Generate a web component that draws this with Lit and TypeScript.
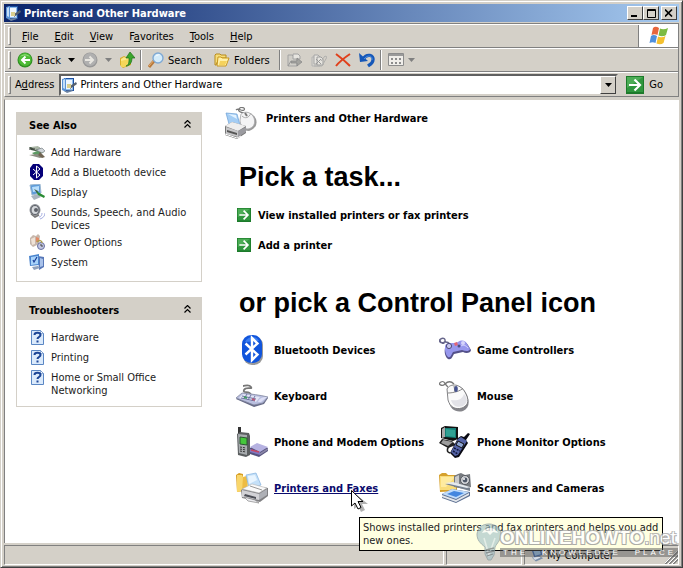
import { LitElement, html, css, svg } from "lit";
import { customElement } from "lit/decorators.js";

const draw = (w: number, h: number, vw: number, vh: number, body: unknown) =>
  html`<svg width=${w} height=${h} viewBox="0 0 ${vw} ${vh}" aria-hidden="true">${body}</svg>`;
const small = (body: unknown) => draw(16, 16, 16, 16, body);
const large = (body: unknown) => draw(32, 32, 32, 32, body);

const caret = draw(7, 4, 7, 4, svg`<path d="M0 0h7L3.500 4z" fill="currentColor"/>`);
const checklist = small(svg`
  <path d="M3 1h10v13H3z" fill="#1d4fa0"/><path d="M4 2h8v11H4z" fill="#8fbdec"/>
  <path d="M5 3h6v9H5z" fill="#eef6ff"/><path d="M1 2l4-1v14l-4-2z" fill="#5b93d6"/><path d="M2 3l2-1v10l-2-1z" fill="#c4def8"/>
  <path d="M9 9l6-4 1 2-7 5z" fill="#55606e"/><path d="M6 7h4v4H6z" fill="#d9cf8f"/><path d="M3 14l8-1 1 1-6 2z" fill="#6c82a0"/>`);
const backIcon = small(svg`
  <circle cx="8" cy="8" r="7.500" fill="#2f8f22"/><circle cx="8" cy="7.500" r="6.500" fill="#4dbb35"/>
  <path d="M3 5a6 6 0 0 1 10 0c-3-2-7-2-10 0z" fill="#94dd7d"/>
  <path d="M13 8H5M8.500 4.500L5 8l3.500 3.500" stroke="#fff" stroke-width="2" fill="none"/>`);
const forwardIcon = small(svg`
  <circle cx="8" cy="8" r="7.500" fill="#989898"/><circle cx="8" cy="7.500" r="6.500" fill="#b0b0b0"/>
  <path d="M3 8h8M7.500 4.500L11 8l-3.500 3.500" stroke="#e8e6e0" stroke-width="2" fill="none"/>`);
const upIcon = small(svg`
  <path d="M1 6l4-2 2 1 5-1v9l-8 3-3-3z" fill="#d8ae2c"/><path d="M2 7l3-2 2 1 4-1-1 8-6 2-2-2z" fill="#fbe88a"/>
  <path d="M2 9l8-2-2 7-6 1z" fill="#f4d659"/>
  <path d="M7 14c3-1 3-4 3-8H7l4-6 5 6h-3c0 4-2 8-6 8z" fill="#3aa62b" stroke="#1e6f17" stroke-width=".7"/>`);
const searchIcon = small(svg`
  <path d="M1 15l5-6" stroke="#b8793a" stroke-width="3"/><path d="M1 14l5-6" stroke="#e4af74" stroke-width="1"/>
  <circle cx="10" cy="6" r="5" fill="#d4ecfb" stroke="#7fa9d4" stroke-width="1.400"/><path d="M7 5c1-2 3-3 5-2-2 0-4 1-5 2z" fill="#fff"/>`);
const foldersIcon = small(svg`
  <path d="M1 3l1-1h4l1 1h5v3H5L2 13H1z" fill="#f6dd79" stroke="#b78b1e"/>
  <path d="M4 5h3l1 1h7l-3 8H3z" fill="#fff0a8" stroke="#c9981f"/><path d="M6 9h7l-2 4H5z" fill="#f5d25c"/>`);
const moveIcon = small(svg`
  <path d="M1 3h4l1 1h4v10H1z" fill="#d0cec8" stroke="#a2a2a2"/><path d="M6 2h5l2 2v3H6z" fill="#e7e5e0" stroke="#a2a2a2"/>
  <path d="M4 9h6V6l5 4-5 4v-3H4z" fill="#a4a4a0" stroke="#858585" stroke-width=".7"/><path d="M1 14l3-5" stroke="#999"/>`);
const copyIcon = small(svg`
  <path d="M1 5h4l1 1h3v8H1z" fill="#d6d4ce" stroke="#b4b4b4"/><path d="M3 3h4l2 2v7H3z" fill="#e7e5e0" stroke="#a6a6a6"/>
  <path d="M6 5h4l2 2v6H6z" fill="#e7e5e0" stroke="#9c9c9c"/><path d="M10 9l4-5 2 1-5 9H3" fill="none" stroke="#b0b0ae"/><path d="M5 7l5 5M10 7l-5 5" stroke="#999"/>`);
const deleteIcon = small(svg`<path d="M1 2C5 5 10 9 15 14M15 2C9 6 5 9 1 14" stroke="#e0401c" stroke-width="2" fill="none"/>`);
const undoIcon = small(svg`
  <path d="M4 7c4-6 11-4 10 1 0 3-2 4-5 6" stroke="#1557b8" stroke-width="3.200" fill="none"/>
  <path d="M0 1l1 9 8-1z" fill="#1557b8"/><path d="M5 7c4-5 9-3 8 1" stroke="#4a8de0" stroke-width="1" fill="none"/>`);
const viewsIcon = small(svg`
  <path d="M.5 1.500h15v12H.5z" fill="#f0eeea" stroke="#8c8c8c"/><path d="M1 2h14v2H1z" fill="#9a9a9a"/>
  <path d="M3 6h2v2H3zm4 0h2v2H7zm4 0h2v2h-2zM3 10h2v2H3zm4 0h2v2H7zm4 0h2v2h-2z" fill="#8c8c8c"/>`);
const flagIcon = draw(20, 20, 20, 20, svg`
  <path d="M4 2c2-2 4-1 6 0L8.500 9C6.500 8 4.500 8 2.500 9z" fill="#e8663c"/><path d="M11 2.500c2 1 5 1 8-.5l-2 7c-2 1.500-5 1.500-7.500.5z" fill="#7cbb42"/>
  <path d="M2 10c2-1.500 4-1 6 0L6.500 17c-2-1-4-1-6 0z" fill="#4f8fdc"/><path d="M9 10.500c2 1 5 1 7.500-.5l-2 7c-2 1.500-4.500 1.500-7 .5z" fill="#f4c02e"/>`);
const greenArrow = (s: number) => draw(s, s, 18, 18, svg`
  <path d="M0 0h18v18H0z" fill="#1c7a2b"/><path d="M1 1h16v15H1z" fill="#2f963e"/><path d="M1 1h16L1 12z" fill="#4bac55"/>
  <path d="M3 9h11M8.500 3.500L14 9l-5.500 5.500" fill="none" stroke="#fff" stroke-width="2.200"/>`);
const chevrons = draw(7, 8, 7, 8, svg`<path d="M.5 3.500l3-3 3 3M.5 7.500l3-3 3 3" fill="none" stroke="#000" stroke-width="1.200"/>`);

const addHardware = small(svg`
  <path d="M0 3h10l4 4-4 1-8-2z" fill="#4f6650"/><path d="M2 3l7-1 3 3-6 1z" fill="#aab6a6"/><path d="M0 5h6" stroke="#333"/>
  <path d="M3 9l8-3 4 2-8 4z" fill="#5c9a63"/><path d="M7 6l6-2 3 3-3 2z" fill="#cfd4d8" stroke="#6d767a" stroke-width=".6"/>
  <path d="M0 11l8-1 6 3-3 1z" fill="#8b8c82"/><path d="M11 8l5 5-3 1-4-3z" fill="#706452"/>`);
const bluetoothSmall = small(svg`
  <path d="M4 0h6l4 4v8l-4 4H5l-4-4V4z" fill="#050079"/><path d="M4 5l7 6-3.500 3V2L11 5l-7 6" stroke="#fff" fill="none"/>`);
const displayIcon = small(svg`
  <path d="M1 1l10-1 1 9-9 2z" fill="#5d9bd9" stroke="#9db8d0"/><path d="M3 3l7-1v5l-6 1z" fill="#b7defc"/>
  <path d="M2 12l7-2 3 3-7 3z" fill="#a9b4bf"/><path d="M7 7l9 5-1 2-6-3z" fill="#298b33"/><path d="M5 5l4 2-1 2z" fill="#3b5a3d"/>`);
const soundIcon = small(svg`
  <ellipse cx="6" cy="6" rx="5.500" ry="6" fill="#8b8f95"/><ellipse cx="6" cy="6" rx="4" ry="4.500" fill="#d5d8dc" stroke="#5b5f66"/><circle cx="7" cy="6" r="2" fill="#5d6168"/>
  <path d="M2 10l4 3 4-2" stroke="#777" stroke-width="1.500" fill="none"/><path d="M10 13c2 0 3-2 3-4M11 15c3-1 5-3 5-6" stroke="#a5aee0" fill="none"/>`);
const powerIcon = small(svg`
  <path d="M1 4l3-3 3 1 2-2 2 2-1 8-6 3-3-3z" fill="#c7b7ac"/><path d="M2 5l4-2v7l-3 1z" fill="#efe2d6"/>
  <path d="M7 3l3 1v4H7z" fill="#e28a66"/><circle cx="12" cy="12" r="3.500" fill="#c2c7e2" stroke="#6970a0"/>
  <path d="M8 8c2-2 5-2 5 1" stroke="#a89c50" stroke-width="1.500" fill="none"/><path d="M12 10v2h2" stroke="#444" fill="none"/>`);
const systemIcon = small(svg`
  <path d="M9 2l6 1v10l-5 3z" fill="#5878b8"/><path d="M11 4l3 1v7l-3 1z" fill="#a9c2ea"/><path d="M0 2l10-2v11L1 12z" fill="#4b85ce"/>
  <path d="M2 3l7-1v8l-7 1z" fill="#a8d3fa"/><path d="M4 6l1 2 3-5" stroke="#1b3d96" stroke-width="1.200" fill="none"/><path d="M3 13l6-1 2 2-6 2z" fill="#8fa1bd"/>`);
const helpDoc = small(svg`
  <path d="M2.500 1.500h9l3 3v11h-12z" fill="#dbeafb" stroke="#5b87c4"/><path d="M11.500 1.500v3h3z" fill="#fff" stroke="#5b87c4" stroke-width=".6"/>
  <path d="M5.500 6c0-3 6-3 6 0 0 2-3 2-3 4" stroke="#1c4596" stroke-width="2" fill="none"/><path d="M7.500 11.500h2v2h-2z" fill="#1c4596"/>`);

const printerMouse = draw(33, 33, 33, 33, svg`
  <path d="M12 3c3-3 5 2 8 0 2-2-3-4-5-1s4 4 8 4" stroke="#777" stroke-width="1.200" fill="none"/>
  <path d="M17 8c5-5 12-2 15 4 2 6-2 11-7 12-6 0-9-5-9-10z" fill="#999"/><path d="M17 7c5-4 11-1 13 4 2 6-1 10-6 11-5 0-8-4-8-9z" fill="#f4f4f5" stroke="#a7a7aa" stroke-width=".8"/>
  <path d="M18 9c3 3 7 2 9-3" stroke="#aaa" fill="none"/><path d="M21 6l2 3" stroke="#777" stroke-width="2"/>
  <path d="M2 6l11 1 3 11-11-1z" fill="#a4cdf4" stroke="#6b9fd4" stroke-width=".7"/><path d="M4 7l8 1 1 4z" fill="#e4f3ff"/>
  <path d="M1 19l7-4 14 4v7l-9 6-12-4z" fill="#777"/><path d="M1 19l7-4 14 4-8 5z" fill="#eee"/><path d="M2 20l12 4v6L2 27z" fill="#c6c6c8"/><path d="M14 24l8-4v5l-8 5z" fill="#9b9ba0"/><path d="M3 23l10 3v2L3 25z" fill="#555"/><path d="M1 27l12 4 4-2" stroke="#fff" fill="none"/>`);
const bluetoothLarge = large(svg`
  <rect x="7" y="2" width="20" height="29" rx="9" fill="#999"/><rect x="6" y="1" width="20" height="28" rx="9" fill="#1155dc"/>
  <path d="M9 8c3-6 11-7 14-1z" fill="#3a7df0"/><path d="M9.500 9.500l12 11L16 26V4l5.500 5.500-12 11" stroke="#fff" stroke-width="2.400" fill="none"/>`);
const keyboardIcon = large(svg`
  <path d="M15 15c-1-5-9-1-7-5s9 0 7-3-6-1-8-1" stroke="#777" stroke-width="1.800" fill="none"/>
  <path d="M0 19l6-5 26 4-4 6-10 3z" fill="#666a86"/><path d="M0 18l6-5c9 1 18 2 26 4l-5 6-9 2z" fill="#b9bfdf" stroke="#82869f" stroke-width=".8"/>
  <path d="M3 18l4-4 17 3-4 5z" fill="#e3e5f5"/><path d="M6 16l14 3M5 18l14 3M8 19l3-5M12 20l3-5M16 21l3-5" stroke="#6d75a1" stroke-width="1"/><path d="M8 17l3 1" stroke="#479a66" stroke-width="2"/><path d="M16 19l3 1" stroke="#b65b7c" stroke-width="2"/>
  <path d="M22 22c1-4 5-5 9-5l-6 5z" fill="#dddff6"/>`);
const phoneIcon = large(svg`
  <path d="M2 1h3v7H2z" fill="#333"/><path d="M1 8l3-2 9 1 1 3v19l-4 2-8-2z" fill="#5b5e60"/><path d="M2 8l9 1v20l-8-2z" fill="#a8acaf"/><path d="M4 11l7 1v7l-7-1z" fill="#45c83c" stroke="#2d5732"/>
  <path d="M4 21l6 1M4 23l6 1M4 25l6 1" stroke="#333" stroke-dasharray="2 1"/>
  <path d="M14 22l7-4 11 4v3l-9 6-9-3z" fill="#55527d"/><path d="M14 21l7-4 11 4-8 5z" fill="#b6b2e1"/><path d="M14 23l10 3v3l-10-3z" fill="#7f78c2"/><path d="M15 24l8 2" stroke="#c84563" stroke-width="1.500"/><path d="M24 27l8-5v2l-8 5z" fill="#8b87a8"/>`);
const printerIcon = large(svg`
  <path d="M0 3l3-2 4 1v17l-6 1z" fill="#d89f22"/><path d="M1 3h5l1 2 8-1v14L1 20z" fill="#f9d66b"/><path d="M7 5l4-1v14l-5 1z" fill="#eebc43"/>
  <path d="M10 3l10-2 5 12-12 3z" fill="#c4e0f8" stroke="#84b2df" stroke-width=".7"/><path d="M12 4l7-1 2 5-8 4z" fill="#e9f5ff"/>
  <path d="M5 18l10-5 17 3v8l-8 6-18-4z" fill="#808083"/><path d="M6 17l10-5 15 4-8 5z" fill="#fafafa" stroke="#aaa" stroke-width=".5"/><path d="M6 18l17 4v6L6 25z" fill="#d2d2d6"/><path d="M23 22l8-5v6l-8 5z" fill="#aeb0b6"/><path d="M9 22l11 3v2L8 24z" fill="#4c4e56"/><path d="M8 25l11 3 4 3-11-2z" fill="#ececf0" stroke="#888" stroke-width=".7"/><path d="M14 14l12 4" stroke="#999"/>`);
const gameIcon = large(svg`
  <path d="M11 10C6 5 4 11 1 8s6-6 5-1-5 1-5-1" stroke="#66658a" stroke-width="1.400" fill="none"/>
  <path d="M7 11c4-3 9 0 12-2 4-3 8-1 10 2l3 5c0 3-5 4-8 2l-9 2c-2 3-2 6-6 5-4-3-4-10-2-14z" fill="#54518a"/>
  <path d="M7 10c4-2 9 0 12-2 4-3 8-1 9 2l3 5c-1 3-5 2-8 1l-9 2c-2 3-2 6-5 5-3-3-4-10-2-13z" fill="#9797ed"/>
  <circle cx="10" cy="12" r="2.600" fill="#c6c5ed" stroke="#4d4c78"/><path d="M15 9l3-1 1 3-3 1z" fill="#e36575"/><circle cx="24" cy="9" r="2" fill="#d7d6fa"/><circle cx="20" cy="12" r="1.500" fill="#4f4d7f"/><path d="M22 12c3-2 5 0 7 2" stroke="#d4d4ff" fill="none"/>`);
const mouseIcon = large(svg`
  <path d="M9 7C5 4 6 0 2 2S3 7 6 4s6-3 9 0" stroke="#777" stroke-width="1.300" fill="none"/>
  <path d="M8 10c2-7 15-7 20 5 3 8 2 13-4 16-7 2-13-2-14-9z" fill="#85858a"/><path d="M8 9c3-6 14-6 19 5 4 8 1 12-4 14-7 2-12-1-14-8z" fill="#fafafa" stroke="#77777b" stroke-width=".9"/>
  <path d="M9 13c5 0 13-2 15-5" stroke="#888" fill="none"/><path d="M15 6l1 6" stroke="#888"/><ellipse cx="17" cy="9" rx="1.800" ry="3" fill="#45528e"/>
  <path d="M12 20c2 8 11 9 15 3 2-3 0-7-2-9-2 6-7 7-13 6z" fill="#e2e2e7"/>`);
const monitorPhone = large(svg`
  <path d="M2 2l4-2 13 1v12l-5 2-12-3z" fill="#111"/><path d="M3 3l3-2v10l-3 1z" fill="#aaa"/><path d="M6 2h11v10L6 11z" fill="#157d76"/><path d="M7 3l9 1v7l-9-1z" fill="#30a193"/>
  <path d="M3 13l10 2 4 4-8 3-9-5z" fill="#222"/><path d="M4 14l10 2-5 4-7-3z" fill="#9d9d9d"/>
  <path d="M19 12l3-2 3 1 4-4 2 1-4 6 2 3-9 14-4 1-5-5z" fill="#090912"/><path d="M19 13l3-2 6 4-9 14-3 1-4-4z" fill="#5564a7"/><path d="M19 15l6 3-2 4-6-3z" fill="#8fa6d5" stroke="#111"/><path d="M15 22l6 3M14 25l5 3" stroke="#10173d" stroke-width="1.500" stroke-dasharray="2 1"/><path d="M11 20c-3 2-4 6 0 7" stroke="#222" stroke-width="1.500" fill="none"/>`);
const scannerIcon = large(svg`
  <path d="M0 3l3-2h4l2 2h9v16L1 20z" fill="#d6a12d"/><path d="M1 4h16v14H1z" fill="#f9dc79"/><path d="M2 5h14L7 15H2z" fill="#ffeb9f"/>
  <path d="M15 4l4-2 3-1 4 2 5-1 1 13-6 2-11-2z" fill="#777b80"/><path d="M16 5l4-2v11l-4 1z" fill="#c9cacc"/><circle cx="26" cy="8" r="4.500" fill="#d2d4d8" stroke="#55585f"/><circle cx="26" cy="8" r="2.400" fill="#4f5868"/><circle cx="25" cy="7" r="1" fill="#fff"/>
  <path d="M6 12l8-1 17 5v3z" fill="#77818f"/><path d="M6 11l8-1 17 5-3 1z" fill="#e5eaef"/><path d="M3 22l10-5 18 3v4l-14 7-14-5z" fill="#5e7193"/><path d="M3 22l10-5 17 3-13 7z" fill="#c0dcfb"/><path d="M8 22l7-3 10 2-8 4z" fill="#4386df"/><path d="M3 23l14 5 13-7v2l-13 7-14-5z" fill="#e4e7eb"/>`);
const cursorIcon = draw(20, 24, 20, 24, svg`
  <path d="M4 4v16l4-3 3 6 4-2-3-6h6z" fill="#000" opacity=".3"/>
  <path d="M1.500 1.500v15.500l3.500-3 3 6 3-1.500-3-6H13z" fill="#fff" stroke="#000"/>`);
const computerIcon = draw(13, 14, 16, 16, svg`
  <path d="M1 2l11-2 2 8-10 3z" fill="#2d62b8"/><path d="M3 3l8-1 1 5-7 2z" fill="#9fd0ff"/><path d="M1 11l9-2 5 3-9 4z" fill="#788da8"/><path d="M2 11l8-1 2 1-7 3z" fill="#d6dce6"/>`);
const gripIcon = draw(13, 13, 13, 13, svg`
  <path d="M0 13L13 0M4 13l9-9M8 13l5-5" stroke="#808080" stroke-width="2"/><path d="M-1 13L13-1M3 13l10-10M7 13l6-6" stroke="#fff"/>`);
const bulbIcon = draw(28, 38, 28, 38, svg`
  <path d="M9 24C4 20 1 17 1 11 2 4 7 1 13 1s12 4 12 10c0 6-4 9-6 13l-1 8-3 5h-3l-3-6z" fill="#9dbfc8" fill-opacity=".8" stroke="#8b9ca1"/>
  <path d="M6 10c3-6 12-7 16 0l-5-1-3 3-3-3z" fill="#f6fafb"/><path d="M8 15l5 17 6-17" fill="none" stroke="#dce8ea" stroke-width="1.500"/><path d="M10 27l8-2M10 30l8-2M11 33l6-2" stroke="#737d80" stroke-width="1.300"/>`);

@customElement("side-panel")
export class SidePanel extends LitElement {
  static properties = { heading: {}, items: { attribute: false } };
  declare heading: string;
  declare items: [unknown, string][];
  static styles = css`
    :host { display: block; border: 1px solid #d4d0c8; background: #fff; }
    .head { display: flex; align-items: center; justify-content: space-between; height: 22px; padding: 0 10px 0 12px; background: #d4d0c8; }
    h2 { margin: 0; font-size: 11px; font-weight: bold; padding-top: 3px; }
    button { border: 0; padding: 0; background: none; display: flex; }
    ul { list-style: none; margin: 0; padding: 9px 12px 11px; display: flex; flex-direction: column; gap: 4px; }
    a { display: grid; grid-template-columns: 16px 1fr; gap: 6px; color: #1c1c1c; text-decoration: none; line-height: 13px; }
    .label { padding-top: 2px; margin-bottom: -2px; }
    svg { display: block; }
  `;
  render() {
    return html`<div class="head"><h2>${this.heading}</h2><button aria-label="Collapse">${chevrons}</button></div>
      <ul>${this.items.map(([icon, label]) => html`<li><a href="#">${icon}<span class="label">${label}</span></a></li>`)}</ul>`;
  }
}

@customElement("app-root")
export class AppRoot extends LitElement {
  static styles = css`
    :host { display: block; font-family: "DejaVu Sans Condensed", "Noto Sans", sans-serif; font-size: 11px; color: #000; }
    * { box-sizing: border-box; }
    svg { display: block; flex: none; }
    button, input { font: inherit; color: inherit; }
    button { border: 0; padding: 0; background: none; }
    u { text-underline-offset: 1px; }
    .window { position: relative; display: flex; flex-direction: column; min-height: 100vh; background: #d4d0c8; padding: 2px; border: 1px solid; border-color: #d4d0c8 #404040 #404040 #d4d0c8; box-shadow: inset 1px 1px #fff, inset -1px -1px #808080; overflow: hidden; }
    .title { display: flex; align-items: center; height: 18px; margin: 1px 1px 1px; padding: 0 2px 0 1px; background: linear-gradient(90deg, #0a246a, #a6caf0); color: #fff; gap: 2px; }
    h1 { flex: 1; margin: 0; padding-left: 1px; font-size: 11px; font-weight: bold; }
    .caption { display: flex; }
    .caption button { width: 16px; height: 14px; display: grid; place-items: center; background: #d4d0c8; border: 1px solid; border-color: #fff #404040 #404040 #fff; }
    .bars { margin: 0 1px; border: 1px solid; border-color: #808080 #808080 #808080 #fff; }
    .bar { display: flex; align-items: center; height: 24px; padding-left: 3px; border-top: 1px solid #fff; border-bottom: 1px solid #808080; }
    .bar:last-child { border-bottom: 0; height: 24px; }
    .grip { width: 3px; height: 18px; border: 1px solid; border-color: #fff #808080 #808080 #fff; }
    nav { display: flex; flex: 1; padding-left: 3px; }
    nav button { padding: 0 8px; }
    .flag { align-self: stretch; width: 40px; background: #fff; border-left: 1px solid #808080; display: grid; place-items: center; }
    .tool { display: flex; align-items: center; gap: 4px; height: 22px; padding: 0 4px; }
    .wide { padding-right: 8px; }
    .drop { padding: 0 3px; color: #000; }
    .dim { color: #808080; }
    .sep { width: 2px; height: 20px; margin: 0 2px 0 1px; border-left: 1px solid #808080; border-right: 1px solid #fff; }
    .first { margin-left: 2px; }
    .address { padding: 0 5px 0 4px; }
    .field { flex: 1; display: flex; align-items: center; height: 22px; background: #fff; border: 2px solid; border-color: #606060 #d4d0c8 #d4d0c8 #606060; }
    .field input { flex: 1; min-width: 0; border: 0; outline: 0; padding: 0 0 0 3px; background: none; height: 18px; }
    .pick { width: 16px; height: 18px; display: grid; place-items: center; background: #d4d0c8; border: 1px solid; border-color: #fff #404040 #404040 #fff; }
    .go { display: flex; align-items: center; gap: 5px; padding: 0 15px 0 8px; }
    .body { flex: 1; display: grid; grid-template-columns: 186px 1fr; margin: 2px 1px 0; background: #fff; border-left: 1px solid #808080; border-top: 1px solid #d4d0c8; padding: 12px 11px 0; column-gap: 22px; }
    aside { display: flex; flex-direction: column; gap: 15px; }
    .top { display: flex; gap: 9px; margin-top: -5px; height: 34px; }
    h2 { margin: 0; font-size: 11px; padding-top: 5px; }
    h3 { margin: 0; padding-left: 15px; font: bold 27px/32px "Liberation Sans", Arial, sans-serif; }
    .top + h3 { margin-top: 20px; }
    .tasks { margin: 14px 0 34px; padding: 0 0 0 13px; list-style: none; display: flex; flex-direction: column; gap: 14px; }
    .tasks a { display: flex; align-items: center; gap: 7px; height: 16px; }
    a { color: #000; font-weight: bold; text-decoration: none; }
    .icons { list-style: none; margin: 8px 0 0; padding: 0 0 0 12px; display: grid; grid-template-columns: 203px 203px; }
    .icons a { display: flex; align-items: center; gap: 6px; height: 46px; width: fit-content; white-space: nowrap; }
    .icons li { position: relative; }
    .icons .hot { color: #0a0a6c; text-decoration: underline; }
    .cursor { position: absolute; left: 114px; top: 24px; z-index: 3; }
    .tip { position: absolute; z-index: 2; left: 123px; top: 52px; width: 304px; height: 34px; padding: 3px; background: #ffffe1; border: 1px solid #000; line-height: 13px; color: #222; }
    footer { display: grid; grid-template-columns: 1fr 76px 155px; gap: 2px; height: 21px; margin: 1px 1px 0; padding-top: 1px; }
    .pane { display: flex; align-items: center; gap: 3px; border: 1px solid; border-color: #808080 #fff #fff #808080; padding-left: 6px; }
    .pane svg:last-child { margin-left: auto; align-self: flex-end; }
    .mark { position: absolute; z-index: 4; right: 4px; bottom: 6px; display: flex; }
    .mark svg { opacity: .75; }
    .words { display: flex; flex-direction: column; justify-content: center; margin-left: -4px; width: 178px; }
    .brand { font: bold 19px/20px "Liberation Sans", Arial, sans-serif; color: #fff; text-shadow: 1px 1px #999, -1px -1px #aaa, 1px -1px #aaa, -1px 1px #999; white-space: nowrap; opacity: .8; }
    .brand .net { font-weight: normal; }
    .slogan { background: rgba(90, 90, 90, .5); color: #fff; font: 8px/9px "Liberation Sans", Arial, sans-serif; display: flex; justify-content: space-between; padding: 0 2px 0 3px; letter-spacing: 3px; white-space: nowrap; }
  `;
  render() {
    const also = [[addHardware, "Add Hardware"], [bluetoothSmall, "Add a Bluetooth device"], [displayIcon, "Display"], [soundIcon, "Sounds, Speech, and Audio Devices"], [powerIcon, "Power Options"], [systemIcon, "System"]];
    const trouble = [[helpDoc, "Hardware"], [helpDoc, "Printing"], [helpDoc, "Home or Small Office Networking"]];
    const applets: [unknown, string][] = [[bluetoothLarge, "Bluetooth Devices"], [gameIcon, "Game Controllers"], [keyboardIcon, "Keyboard"], [mouseIcon, "Mouse"], [phoneIcon, "Phone and Modem Options"], [monitorPhone, "Phone Monitor Options"], [printerIcon, "Printers and Faxes"], [scannerIcon, "Scanners and Cameras"]];
    return html`<div class="window">
      <header class="title">${checklist}<h1>Printers and Other Hardware</h1>
        <div class="caption"><button aria-label="Minimize">${draw(8, 8, 8, 8, svg`<path d="M0 6h6v2H0z"/>`)}</button><button aria-label="Maximize">${draw(9, 9, 9, 9, svg`<path d="M.5 .5h8v8h-8zM0 1.500h9" fill="none" stroke="#000"/>`)}</button></div>
        <div class="caption"><button aria-label="Close">${draw(8, 8, 8, 8, svg`<path d="M0 .500l7 7M7 .500l-7 7" stroke="#000" stroke-width="1.600"/>`)}</button></div>
      </header>
      <div class="bars">
        <div class="bar"><span class="grip"></span>
          <nav><button><u>F</u>ile</button><button><u>E</u>dit</button><button><u>V</u>iew</button><button>F<u>a</u>vorites</button><button><u>T</u>ools</button><button><u>H</u>elp</button></nav>
          <div class="flag">${flagIcon}</div></div>
        <div class="bar"><span class="grip"></span>
          <button class="tool first">${backIcon}Back</button><button class="drop" aria-label="Back history">${caret}</button>
          <button class="tool" aria-label="Forward">${forwardIcon}</button><button class="drop dim" aria-label="Forward history">${caret}</button>
          <button class="tool" aria-label="Up">${upIcon}</button><span class="sep"></span>
          <button class="tool wide">${searchIcon}Search</button><button class="tool wide">${foldersIcon}Folders</button><span class="sep"></span>
          <button class="tool" aria-label="Move to">${moveIcon}</button><button class="tool" aria-label="Copy to">${copyIcon}</button><button class="tool" aria-label="Delete">${deleteIcon}</button><button class="tool" aria-label="Undo">${undoIcon}</button><span class="sep"></span>
          <button class="tool dim" aria-label="Views">${viewsIcon}${caret}</button></div>
        <div class="bar"><span class="grip"></span><label class="address" for="address">A<u>d</u>dress</label>
          <div class="field">${checklist}<input id="address" value="Printers and Other Hardware"><button class="pick" aria-label="Show addresses">${caret}</button></div>
          <button class="go">${greenArrow(18)}Go</button></div>
      </div>
      <div class="body">
        <aside><side-panel heading="See Also" .items=${also}></side-panel><side-panel heading="Troubleshooters" .items=${trouble}></side-panel></aside>
        <main>
          <div class="top">${printerMouse}<h2>Printers and Other Hardware</h2></div>
          <h3>Pick a task...</h3>
          <ul class="tasks"><li><a href="#">${greenArrow(14)}View installed printers or fax printers</a></li><li><a href="#">${greenArrow(14)}Add a printer</a></li></ul>
          <h3>or pick a Control Panel icon</h3>
          <ul class="icons">${applets.map(([icon, name]) => html`<li><a href="#">${icon}<span class=${name === "Printers and Faxes" ? "hot" : ""}>${name}</span></a>
            ${name === "Printers and Faxes" ? html`<div class="cursor">${cursorIcon}</div><div class="tip" role="tooltip">Shows installed printers and fax printers and helps you add new ones.</div>` : ""}</li>`)}</ul>
        </main>
      </div>
      <footer><div class="pane"></div><div class="pane"></div><div class="pane">${computerIcon}<span>My Computer</span>${gripIcon}</div></footer>
      <div class="mark">${bulbIcon}<div class="words"><div class="brand">ONLINEHOWTO<span class="net">.net</span></div><div class="slogan"><span>THE</span><span>KNOWLEDGE</span><span>PLACE</span></div></div></div>
    </div>`;
  }
}
